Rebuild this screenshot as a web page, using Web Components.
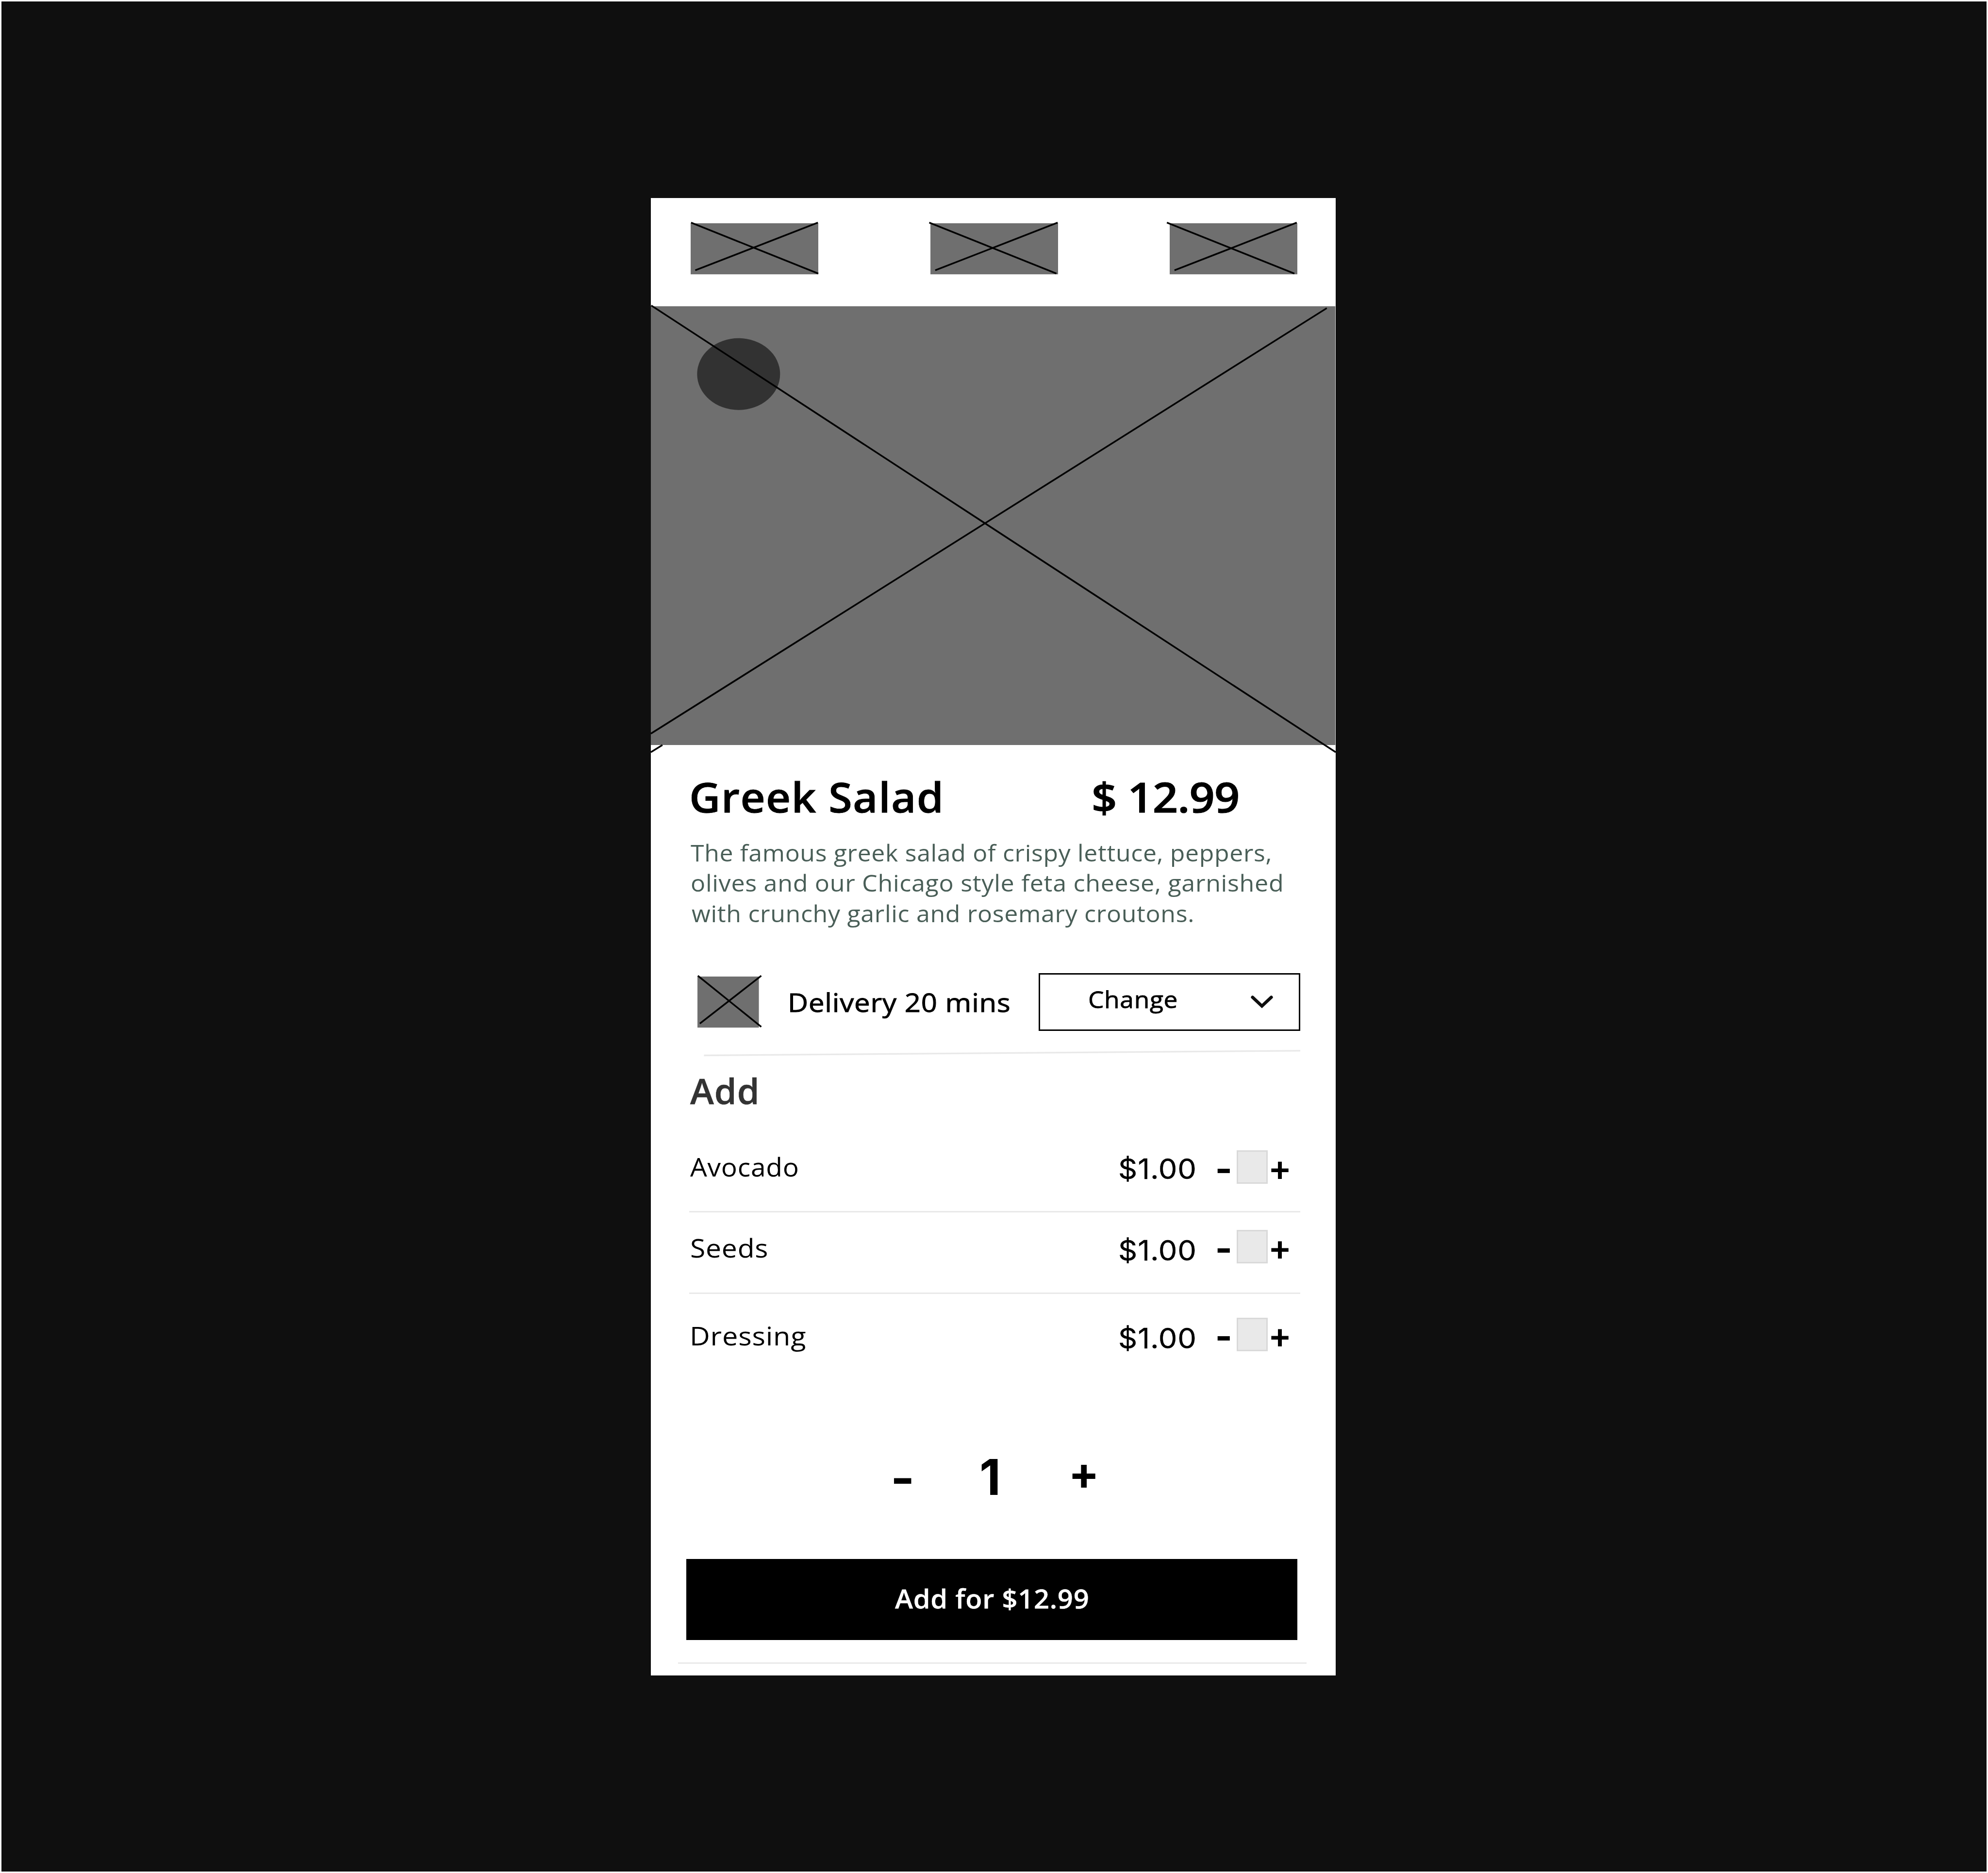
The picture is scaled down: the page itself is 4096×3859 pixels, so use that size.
<!DOCTYPE html>
<html lang="en">
<head>
<meta charset="utf-8">
<title>Greek Salad</title>
<style>
/* 1rem = 100 design units */
html { font-size: 82.183px; }
body { margin: 0; background: #fff; font-family: "Open Sans", "Noto Sans", sans-serif; }
</style>
</head>
<body>
<order-page></order-page>
<script>
const r = n => (n / 100) + 'rem';
const ctx = document.createElement('canvas').getContext('2d');

class UiBase extends HTMLElement {
  constructor() { super(); this.attachShadow({ mode: 'open' }); }
  n(name, d = 0) { return this.hasAttribute(name) ? parseFloat(this.getAttribute(name)) : d; }
  connectedCallback() { this.shadowRoot.innerHTML = this.render(); }
}

/* One line of type whose box is its cap height (h) by its inked width (w). */
customElements.define('ink-text', class extends UiBase {
  render() {
    const w = this.n('w'), h = this.n('h'), weight = this.getAttribute('weight') || '400';
    const fam = this.getAttribute('family') || 'Open Sans';
    const text = this.textContent;
    ctx.font = `${weight} 1000px "${fam}"`;
    const cap = ctx.measureText('H').actualBoundingBoxAscent / 1000;
    const m = ctx.measureText(text);
    const ink = (m.actualBoundingBoxLeft + m.actualBoundingBoxRight) / 1000;
    const glyph = this.hasAttribute('glyph');
    const fs = glyph ? w / ink : h * 1.015 / cap;
    const ls = text.length > 1 ? this.n('track', 0.014) : 0;
    const sx = text.length > 1 ? (w / fs) / (ink + ls * (text.length - 1)) : 1;
    const drop = glyph ? m.actualBoundingBoxDescent / 1000 * fs : -0.9;
    const base = h / 2 + (m.fontBoundingBoxAscent - m.fontBoundingBoxDescent) / 2000 * fs;
    return `<style>
      :host { display: flex; flex: none; width: ${r(w)}; height: ${r(h)}; margin: ${r(this.n('top'))} 0 0 ${r(this.n('left'))}; }
      span { flex: none; white-space: pre; font: ${weight} ${r(fs)}/${r(h)} "${fam}", sans-serif; letter-spacing: ${ls}em;
        transform: scaleX(${sx}); transform-origin: 0 0; -webkit-text-stroke: ${r(this.n('stroke'))} currentColor;
        margin-top: ${r(h - drop - base)}; margin-left: ${r(m.actualBoundingBoxLeft / 1000 * fs * sx)}; }
    </style><span><slot></slot></span>`;
  }
});

/* Image placeholder with drawn diagonals: lines="x1 y1 x2 y2, ..." */
customElements.define('image-placeholder', class extends UiBase {
  render() {
    const w = this.n('w'), h = this.n('h');
    const lines = this.getAttribute('lines').split(',').map(l => {
      const [a, b, c, d] = l.trim().split(/\s+/);
      return `<line x1="${a}" y1="${b}" x2="${c}" y2="${d}"/>`;
    }).join('');
    return `<style>
      :host { display: block; flex: none; width: ${r(w)}; height: ${r(h)}; margin: ${r(this.n('top'))} 0 0 ${r(this.n('left'))}; }
      svg { display: block; width: 100%; height: 100%; overflow: visible; }
    </style><svg viewBox="0 0 ${w} ${h}"><rect width="${w}" height="${h}" fill="#6f6f6f"/>
      ${this.hasAttribute('badge') ? '<ellipse cx="220" cy="170" rx="104" ry="90" fill="#323232"/>' : ''}
      <g stroke="#000" stroke-width="4.2">${lines}</g></svg>`;
  }
});

customElements.define('rule-line', class extends UiBase {
  render() {
    return `<style>:host { display: block; flex: none; height: ${r(4)}; background: #e9e9e9;
      width: ${r(this.n('w'))}; margin: ${r(this.n('top'))} 0 0 ${r(this.n('left'))}; }</style>`;
  }
});

customElements.define('slanted-rule', class extends UiBase {
  render() {
    return `<style>:host { display: block; flex: none; width: ${r(1496)}; height: ${r(16)}; margin: ${r(48)} 0 0 ${r(132)}; }
      svg { display: block; width: 100%; height: 100%; overflow: visible; }</style>
      <svg viewBox="0 0 1496 16"><line x1="0" y1="14" x2="1496" y2="2.3" stroke="#e9e9e9" stroke-width="4"/></svg>`;
  }
});

customElements.define('app-header', class extends UiBase {
  render() {
    return `<style>:host { display: flex; gap: ${r(280)}; box-sizing: border-box; height: ${r(272)}; padding: ${r(64)} 0 0 ${r(100)}; }</style>
      <image-placeholder w="320" h="128" lines="1 -1.6 320 126, 11.5 118 319 -1.6"></image-placeholder>
      <image-placeholder w="320" h="128" lines="-3 -1.6 316 126, 12 118 319 -1.6"></image-placeholder>
      <image-placeholder w="320" h="128" lines="-7 -1.6 312.6 126, 12 118 318.5 -1.6"></image-placeholder>`;
  }
});

customElements.define('dish-summary', class extends UiBase {
  render() {
    return `<style>:host { display: block; }
      .title { display: flex; padding-top: ${r(95)}; color: #000; }
      .desc { display: flex; flex-direction: column; gap: ${r(35.4)}; margin-top: ${r(83.4)}; color: #495e57; }
    </style>
    <div class="title">
      <ink-text w="624.6" h="73" left="101.2" weight="600" stroke="1">Greek Salad</ink-text>
      <ink-text w="361.7" h="73" left="384.5" weight="600" stroke="1.4" track="-0.01">$ 12.99</ink-text>
    </div>
    <div class="desc">
      <ink-text w="1453" h="40.6" left="100">The famous greek salad of crispy lettuce, peppers,</ink-text>
      <ink-text w="1479" h="40.6" left="102.6">olives and our Chicago style feta cheese, garnished</ink-text>
      <ink-text w="1256.5" h="40.6" left="102">with crunchy garlic and rosemary croutons.</ink-text>
    </div>`;
  }
});

customElements.define('select-button', class extends UiBase {
  render() {
    return `<style>:host { display: flex; flex: none; align-items: flex-start; box-sizing: border-box; width: ${r(656)}; height: ${r(144)};
        border: ${r(4)} solid #000; margin-left: ${r(73.5)}; }
      svg { flex: none; width: ${r(56)}; height: ${r(32)}; margin: ${r(52)} 0 0 ${r(186.5)}; }</style>
    <ink-text w="218.7" h="40.7" left="122.8" top="43.2" stroke="1">${this.textContent}</ink-text>
    <svg viewBox="0 0 56 32"><path d="M4.5 4.5 28 26.5 51.5 4.5" fill="none" stroke="#0e0e0e" stroke-width="8" stroke-linecap="round"/></svg>`;
  }
});

customElements.define('delivery-row', class extends UiBase {
  render() {
    return `<style>:host { display: flex; align-items: flex-start; margin-top: ${r(128)}; padding-left: ${r(116)}; }</style>
      <image-placeholder w="154" h="128" top="8" lines="1 -2 160 126, 6 118 160 -2"></image-placeholder>
      <ink-text w="548.8" h="45" left="79.7" top="51" stroke="1.2">Delivery 20 mins</ink-text>
      <select-button>Change</select-button>`;
  }
});

customElements.define('addon-row', class extends UiBase {
  render() {
    const d = this.n('drop');
    return `<style>:host { display: flex; align-items: flex-start; height: ${r(84)}; margin-top: ${r(this.n('top'))}; padding-right: ${r(116.7)}; }
      .controls { display: flex; align-items: flex-start; margin-left: auto; }
      .count { flex: none; box-sizing: border-box; width: ${r(78)}; height: ${r(84)}; margin-left: ${r(16.9)};
        background: #e9e9e9; border: ${r(4)} solid #d9d9d9; }</style>
      <ink-text w="${this.n('w')}" h="45" left="${this.n('left')}" top="${19 + d}">${this.textContent}</ink-text>
      <div class="controls">
        <ink-text w="188.5" h="50.6" top="${21.4 + d}" family="Inter" stroke="0.5">$1.00</ink-text>
        <ink-text glyph w="31.8" h="11" left="56.2" top="46.3" family="Inter" weight="700">-</ink-text>
        <div class="count"></div>
        <ink-text glyph w="45.3" h="46.3" left="7.5" top="26.5" family="Inter" weight="600">+</ink-text>
      </div>`;
  }
});

customElements.define('quantity-stepper', class extends UiBase {
  render() {
    return `<style>:host { display: flex; align-items: flex-start; height: ${r(90)}; margin-top: ${r(270)}; padding-left: ${r(608.3)}; }</style>
      <ink-text glyph w="45.4" h="13.5" top="48.5" family="Inter" weight="600">-</ink-text>
      <ink-text w="44.3" h="90" left="173.6" family="Inter" weight="700">1</ink-text>
      <ink-text glyph w="59" h="56.4" left="183.9" top="17" family="Inter" weight="700">+</ink-text>`;
  }
});

customElements.define('order-button', class extends UiBase {
  render() {
    return `<style>:host { display: flex; align-items: flex-start; width: ${r(1532)}; height: ${r(204)}; margin: ${r(160)} 0 0 ${r(88)};
        background: #000; color: #fff; }</style>
      <ink-text w="483.6" h="46.5" left="523.7" top="77.3" weight="600" stroke="0.5">${this.textContent}</ink-text>`;
  }
});

customElements.define('order-page', class extends UiBase {
  render() {
    return `<style>
      :host { display: flex; align-items: flex-start; box-sizing: border-box; width: 100vw; height: 100vh; background: #0f0f0f;
        border: ${r(4)} solid #fff; padding: ${r(492.4)} 0 0 ${r(1628.4)}; overflow: hidden; }
      main { display: flex; flex-direction: column; flex: none; width: ${r(1716)}; height: ${r(3704)}; background: #fff; color: #000; }
      .add { color: #333; }
    </style>
    <main>
      <app-header></app-header>
      <image-placeholder badge w="1716" h="1100" lines="1 -2 1717 1118, 0 1071.5 1694.6 4.7, 0 1118 29 1100"></image-placeholder>
      <dish-summary></dish-summary>
      <delivery-row></delivery-row>
      <slanted-rule></slanted-rule>
      <ink-text class="add" w="167" h="62" left="98.3" top="57.7" weight="600" stroke="0.8">Add</ink-text>
      <addon-row top="116.3" left="98.3" w="268.7">Avocado</addon-row>
      <rule-line w="1532" left="96" top="68"></rule-line>
      <addon-row top="44" drop="4" left="101.2" w="189.4">Seeds</addon-row>
      <rule-line w="1532" left="96" top="72"></rule-line>
      <addon-row top="60" drop="4" left="103" w="284">Dressing</addon-row>
      <quantity-stepper></quantity-stepper>
      <order-button>Add for $12.99</order-button>
      <rule-line w="1576" left="68" top="56"></rule-line>
    </main>`;
  }
});
</script>
</body>
</html>
